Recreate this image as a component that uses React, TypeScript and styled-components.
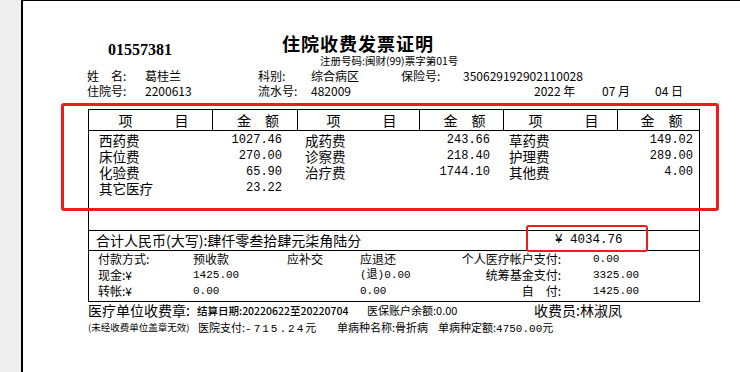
import React from "react";
import styled, { createGlobalStyle } from "styled-components";

const GlobalStyle = createGlobalStyle`
	html, body {
		margin: 0;
		padding: 0;
		background: #efefef;
	}
	body {
		font-family: "Noto Sans CJK SC", "Noto Sans", sans-serif;
		color: #000;
	}
`;

const fees = [
	[["西药费", "1027.46"], ["成药费", "243.66"], ["草药费", "149.02"]],
	[["床位费", "270.00"], ["诊察费", "218.40"], ["护理费", "289.00"]],
	[["化验费", "65.90"], ["治疗费", "1744.10"], ["其他费", "4.00"]],
	[["其它医疗", "23.22"], null, null],
];

// item left inset / amount right inset per column group
const insets = [
	{ item: 10, amount: 16 },
	{ item: 7, amount: 14 },
	{ item: 5, amount: 6 },
];

const payments = [
	["付款方式:", "预收款", "应补交", "应退还", "个人医疗帐户支付:", "0.00"],
	["现金:¥", "1425.00", "", "(退)0.00", "统筹基金支付:", "3325.00"],
	["转帐:¥", "0.00", "", "0.00", "自　付:", "1425.00"],
];

export const App = () => {
	return (
		<>
			<GlobalStyle />
			<Screen>
				<Paper>
					<TitleRow>
						<Number>01557381</Number>
						<Title>住院收费发票证明</Title>
					</TitleRow>
					<Register>注册号码:闽财(99)票字第01号</Register>
					<InfoGrid>
						<span>姓　名:</span>
						<span>葛桂兰</span>
						<span>科别:</span>
						<span>综合病区</span>
						<span>保险号:</span>
						<span>350629192902110028</span>
						<span>住院号:</span>
						<span>2200613</span>
						<span>流水号:</span>
						<span>482009</span>
						<DateCell>
							<DatePart $w={68}>2022 年</DatePart>
							<DatePart $w={53}>07 月</DatePart>
							<DatePart $w={40}>04 日</DatePart>
						</DateCell>
					</InfoGrid>

					<Invoice>
						<FeeHead>
							{[0, 1, 2].map((i) => (
								<React.Fragment key={i}>
									<HeadCell>项　　　目</HeadCell>
									<HeadCell $last={i === 2}>金　额</HeadCell>
								</React.Fragment>
							))}
						</FeeHead>
						<FeeBody>
							{fees.map((row, r) => (
								<FeeRow key={r}>
									{row.map((cell, c) => (
										<React.Fragment key={c}>
											<Item $inset={insets[c].item}>{cell ? cell[0] : ""}</Item>
											<Amount $inset={insets[c].amount}>{cell ? cell[1] : ""}</Amount>
										</React.Fragment>
									))}
								</FeeRow>
							))}
						</FeeBody>
						<TotalRow>
							<TotalWords>合计人民币(大写):肆仟零叁拾肆元柒角陆分</TotalWords>
							<TotalSum>¥ 4034.76</TotalSum>
						</TotalRow>
						<PayBlock>
							{payments.map((row, r) => (
								<PayRow key={r}>
									<span>{row[0]}</span>
									<PayValue $num={r > 0}>{row[1]}</PayValue>
									<span>{row[2]}</span>
									<PayValue $num={r > 0}>{row[3]}</PayValue>
									<PayLabel>{row[4]}</PayLabel>
									<PayValue $num $pad={32}>{row[5]}</PayValue>
								</PayRow>
							))}
						</PayBlock>
					</Invoice>

					<FooterLine>
						<Big>医疗单位收费章:</Big>
						<Small>结算日期:20220622至20220704</Small>
						<Note>医保账户余额:0.00</Note>
						<Big>收费员:林淑凤</Big>
					</FooterLine>
					<NoteLine>
						<Tiny>(未经收费单位盖章无效)</Tiny>
						<span>
							医院支付:<Digits $spacing={2}>-715.24</Digits>元
						</span>
						<span>单病种名称:骨折病</span>
						<span>
							单病种定额:<Digits $spacing={0}>4750.00</Digits>元
						</span>
					</NoteLine>

					<Mark $left={38} $top={102} $w={658} $h={108} $b={3} />
					<Mark $left={503} $top={224} $w={122} $h={27} $b={2} />
				</Paper>
			</Screen>
		</>
	);
};

const Screen = styled.div`
	width: 740px;
	height: 372px;
	overflow: hidden;
	padding-left: 21px;
	box-sizing: border-box;
	background: #efefef;
`;

const Paper = styled.div`
	position: relative;
	height: 372px;
	box-sizing: border-box;
	background: #fff;
	border-left: 2px solid #000;
	border-top: 1px solid #000;
	padding: 31px 0 0 65px;
`;

const TitleRow = styled.div`
	display: flex;
	align-items: flex-start;
	height: 22px;
`;

const Number = styled.div`
	width: 194px;
	box-sizing: border-box;
	padding: 10px 0 0 20px;
	font-family: "Liberation Serif", serif;
	font-weight: 700;
	font-size: 16px;
	line-height: 16px;
`;

const Title = styled.div`
	font-size: 18px;
	line-height: 22px;
	font-weight: 700;
	letter-spacing: 1px;
`;

const Register = styled.div`
	margin: 1px 0 0 232px;
	font-size: 10.5px;
	line-height: 12px;
`;

const InfoGrid = styled.div`
	display: grid;
	grid-template-columns: 58px 113px 53px 90px 62px 1fr;
	margin: 1px 0 0 -1px;
	font-size: 12px;
	line-height: 15px;
`;

const DateCell = styled.div`
	grid-column: 5 / 7;
	display: flex;
	padding-left: 133px;
`;

const DatePart = styled.span<{ $w: number }>`
	width: ${(p) => p.$w}px;
	flex: none;
`;

const Invoice = styled.div`
	width: 612px;
	box-sizing: border-box;
	margin-top: 11px;
	border: 1px solid #000;
`;

const columns = "124px 85px 122px 84px 114px 81px";

const FeeHead = styled.div`
	display: grid;
	grid-template-columns: ${columns};
	border-bottom: 1px solid #000;
`;

const HeadCell = styled.div<{ $last?: boolean }>`
	height: 20px;
	box-sizing: border-box;
	border-right: ${(p) => (p.$last ? "none" : "1px solid #000")};
	text-align: center;
	font-size: 14px;
	line-height: 20px;
	padding-left: 6px;
`;

const FeeBody = styled.div`
	height: 100px;
	box-sizing: border-box;
	padding-top: 1px;
	border-bottom: 1px solid #000;
`;

const FeeRow = styled.div`
	display: grid;
	grid-template-columns: ${columns};
	height: 16px;
	align-items: center;
`;

const Item = styled.div<{ $inset: number }>`
	padding-left: ${(p) => p.$inset}px;
	font-size: 13.5px;
	line-height: 16px;
`;

const Amount = styled.div<{ $inset: number }>`
	padding-right: ${(p) => p.$inset}px;
	text-align: right;
	font-family: "Liberation Mono", monospace;
	font-size: 12px;
	line-height: 16px;
`;

const TotalRow = styled.div`
	display: flex;
	height: 20px;
	box-sizing: border-box;
	align-items: center;
	border-bottom: 1px solid #000;
	padding-left: 7px;
`;

const TotalWords = styled.span`
	width: 459px;
	font-size: 14px;
	line-height: 19px;
`;

const TotalSum = styled.span`
	font-family: "Liberation Mono", monospace;
	font-size: 12.5px;
	line-height: 19px;
`;

const PayBlock = styled.div`
	height: 50px;
	padding-left: 9px;
`;

const PayRow = styled.div`
	display: grid;
	grid-template-columns: 95px 94px 73px 70px 131px 1fr;
	height: 16px;
	align-items: center;
	font-size: 12px;
	line-height: 16px;
	white-space: nowrap;
`;

const PayValue = styled.span<{ $num?: boolean; $pad?: number }>`
	padding-left: ${(p) => p.$pad ?? 0}px;
	font-family: ${(p) => (p.$num ? '"Liberation Mono", "Noto Sans CJK SC", monospace' : '"Noto Sans CJK SC", sans-serif')};
	font-size: ${(p) => (p.$num ? "11px" : "12px")};
`;

const PayLabel = styled.span`
	text-align: right;
`;

const FooterLine = styled.div`
	display: grid;
	grid-template-columns: 109px 170px 167px auto;
	align-items: center;
	height: 15px;
	margin-top: 1px;
	white-space: nowrap;
`;

const Big = styled.span`
	font-size: 14px;
	line-height: 15px;
`;

const Small = styled.span`
	font-size: 10.5px;
	line-height: 15px;
	font-weight: 500;
`;

const Note = styled.span`
	font-size: 11px;
	line-height: 15px;
`;

const NoteLine = styled.div`
	display: grid;
	grid-template-columns: 110px 139px 101px auto;
	margin-top: 2px;
	font-size: 11px;
	line-height: 14px;
	white-space: nowrap;
`;

const Tiny = styled.span`
	font-size: 9.5px;
`;

const Digits = styled.span<{ $spacing: number }>`
	font-family: "Liberation Mono", monospace;
	letter-spacing: ${(p) => p.$spacing}px;
`;

const Mark = styled.div<{ $left: number; $top: number; $w: number; $h: number; $b: number }>`
	position: absolute;
	left: ${(p) => p.$left}px;
	top: ${(p) => p.$top}px;
	width: ${(p) => p.$w}px;
	height: ${(p) => p.$h}px;
	box-sizing: border-box;
	border: ${(p) => p.$b}px solid #ee1c1c;
	border-radius: 3px;
	pointer-events: none;
`;

export default App;
